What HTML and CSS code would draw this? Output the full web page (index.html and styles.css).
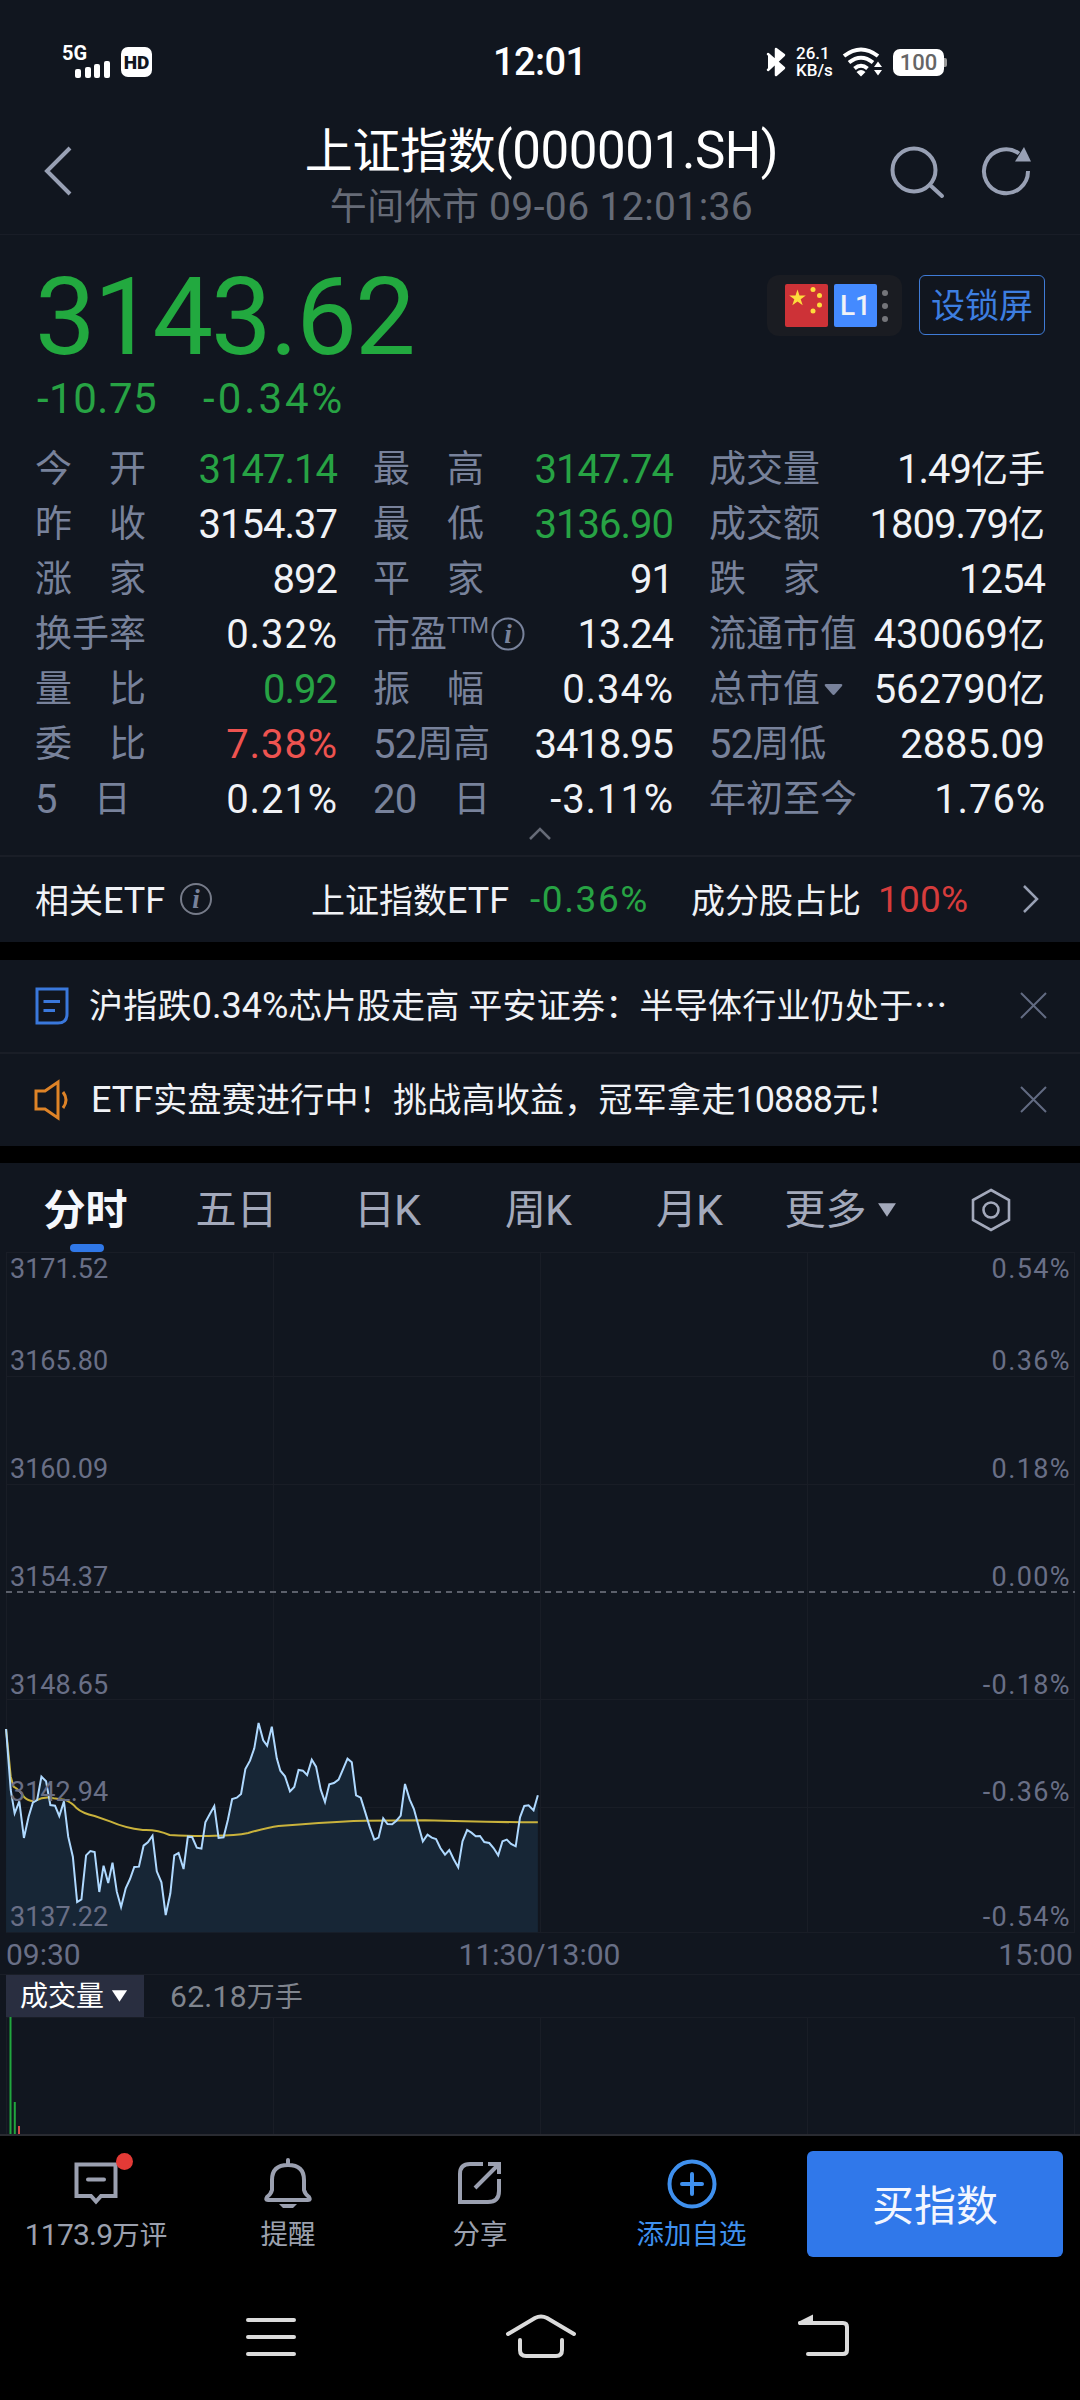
FILE: index.html
```
<!doctype html>
<html lang="zh-CN">
<head>
    <meta charset="UTF-8">
    <title>上证指数(000001.SH)</title>
    <link rel="stylesheet" href="styles.css">
</head>
<body>
<div class="phone">
    <!-- 状态栏 -->
    <div class="status">
        <div class="status-left">
            <svg width="50" height="34" viewBox="0 0 50 34">
                <text x="0" y="15" class="net">5G</text>
                <rect x="13" y="24" width="6" height="9" rx="2"/>
                <rect x="23" y="22" width="6" height="11" rx="2"/>
                <rect x="32" y="19" width="6" height="14" rx="2"/>
                <rect x="42" y="16" width="6" height="17" rx="2"/>
            </svg>
            <span class="hd">HD</span>
        </div>
        <div class="status-time">12:01</div>
        <div class="status-right">
            <svg width="20" height="30" viewBox="0 0 20 30" fill="none" stroke="#fff" stroke-width="2.5" stroke-linejoin="round" stroke-linecap="round">
                <path d="M2 7L18 21L10 28V2L18 8L2 23"/>
            </svg>
            <span class="speed">26.1<br>KB/s</span>
            <svg width="40" height="30" viewBox="0 0 40 30">
                <path d="M2 9Q19 -4 36 9M7 15.5Q19 6 31 15.5M12.5 21.5Q19 16 25.500 21.500" fill="none" stroke="#fff" stroke-width="4"/>
                <path d="M14.500 25Q19 21 23.500 25L19 29.500zM32 20L36 14.500L40 20zM32 23L36 28.500L40 23z"/>
            </svg>
            <span class="battery">100</span>
        </div>
    </div>
    <!-- 标题 -->
    <div class="header">
        <svg class="back" width="32" height="52" viewBox="0 0 32 52"><path d="M28 3L5 26L28 49"/></svg>
        <div class="header-text">
            <h1>上证指数<span>(000001.SH)</span></h1>
            <p>午间休市 <span>09-06 12:01:36</span></p>
        </div>
        <div class="header-icons">
            <svg width="56" height="52" viewBox="0 0 56 52"><circle cx="24" cy="24" r="21.500"/><path d="M40 39L52 50" stroke-linecap="round"/></svg>
            <svg width="50" height="52" viewBox="0 0 50 52"><path d="M37 7.500A22 22 0 1 0 46 25"/><path class="tip" d="M42 1L49 15.500H33z"/></svg>
        </div>
    </div>
    <!-- 最新价 -->
    <div class="quote">
        <div class="quote-left">
            <div class="price">3143.62</div>
            <div class="change"><span>-10.75</span><span class="rate">-0.34%</span></div>
        </div>
        <div class="quote-right">
            <div class="badges">
                <svg width="43" height="43" viewBox="0 0 43 43">
                    <rect width="43" height="43" rx="2" fill="#cd3237"/>
                    <g fill="#fddc3c">
                        <path d="M12.500 5.500L14.500 11.500H20.800L15.700 15.200L17.700 21.300L12.500 17.500L7.300 21.300L9.300 15.200L4.200 11.500H10.500z"/>
                        <circle cx="28" cy="5.500" r="2.500"/><circle cx="34.500" cy="11.500" r="2.500"/>
                        <circle cx="34.500" cy="21" r="2.500"/><circle cx="28" cy="27" r="2.500"/>
                    </g>
                </svg>
                <span class="level">L1</span>
                <span class="dots"><i></i><i></i><i></i></span>
            </div>
            <div class="lock">设锁屏</div>
        </div>
    </div>
    <!-- 指标 -->
    <div class="stats">
        <div><label>今　开</label><span class="down">3147.14</span></div>
        <div><label>最　高</label><span class="down">3147.74</span></div>
        <div><label>成交量</label><span>1.49<em>亿手</em></span></div>
        <div><label>昨　收</label><span>3154.37</span></div>
        <div><label>最　低</label><span class="down">3136.90</span></div>
        <div><label>成交额</label><span>1809.79<em>亿</em></span></div>
        <div><label>涨　家</label><span>892</span></div>
        <div><label>平　家</label><span>91</span></div>
        <div><label>跌　家</label><span>1254</span></div>
        <div><label>换手率</label><span class="pct">0.32%</span></div>
        <div><label>市盈<sup>TTM</sup><svg class="info" width="36" height="36" viewBox="0 0 36 36"><circle cx="18" cy="18" r="15.500"/><text x="18" y="27">i</text></svg></label><span>13.24</span></div>
        <div><label>流通市值</label><span class="wide">430069<em>亿</em></span></div>
        <div><label>量　比</label><span class="down">0.92</span></div>
        <div><label>振　幅</label><span class="pct">0.34%</span></div>
        <div><label>总市值<svg class="tri" width="19" height="13" viewBox="0 0 19 13"><path d="M2 1H17Q19 1 18 3L11 11Q9.500 13 8 11L1 3Q0 1 2 1"/></svg></label><span class="wide">562790<em>亿</em></span></div>
        <div><label>委　比</label><span class="pct up">7.38%</span></div>
        <div><label><b>52</b>周高</label><span>3418.95</span></div>
        <div><label><b>52</b>周低</label><span class="wide">2885.09</span></div>
        <div><label><b>5</b>　日</label><span class="pct">0.21%</span></div>
        <div><label><b>20</b>　日</label><span class="pct">-3.11%</span></div>
        <div><label>年初至今</label><span class="pct">1.76%</span></div>
    </div>
    <div class="fold"><svg width="24" height="16" viewBox="0 0 24 16"><path d="M2 12L12 2L22 12"/></svg></div>
    <!-- 相关ETF -->
    <div class="etf">
        <span class="etf-title">相关<b>ETF</b></span>
        <svg class="info" width="36" height="36" viewBox="0 0 36 36"><circle cx="18" cy="18" r="15"/><text x="18" y="27">i</text></svg>
        <span class="etf-name">上证指数<b>ETF</b></span>
        <span class="etf-num down">-0.36%</span>
        <span class="etf-part">成分股占比</span>
        <span class="etf-num red">100%</span>
        <svg class="arrow" width="20" height="32" viewBox="0 0 20 32"><path d="M3 3L16 16L3 29"/></svg>
    </div>
    <!-- 资讯 -->
    <div class="news">
        <div class="news-row">
            <svg width="36" height="40" viewBox="0 0 36 40" stroke="#3a78dc"><path d="M3 3H33V28Q33 37 24 37H3zM9.500 15.500H26M9.500 24.500H21"/></svg>
            <p>沪指跌<b>0.34%</b>芯片股走高 平安证券：半导体行业仍处于⋯</p>
            <svg class="close" width="27" height="27" viewBox="0 0 27 27"><path d="M1 1L26 26M26 1L1 26"/></svg>
        </div>
        <div class="news-row">
            <svg width="38" height="40" viewBox="0 0 38 40" stroke="#de8327"><path d="M2 11H11L24 2V38L11 29H2zM29 12Q35 20 29 28"/></svg>
            <p><b>ETF</b>实盘赛进行中！挑战高收益，冠军拿走<b class="tight">10888</b>元！</p>
            <svg class="close" width="27" height="27" viewBox="0 0 27 27"><path d="M1 1L26 26M26 1L1 26"/></svg>
        </div>
    </div>
    <!-- 周期切换 -->
    <div class="tabs">
        <div class="tab active">分时</div>
        <div class="tab">五日</div>
        <div class="tab">日<b>K</b></div>
        <div class="tab">周<b>K</b></div>
        <div class="tab">月<b>K</b></div>
        <div class="tab">更多<svg class="tri" width="20" height="14" viewBox="0 0 19 13"><path d="M1 0H18L9.500 13z"/></svg></div>
        <svg class="hex" width="42" height="44" viewBox="0 0 42 44"><path d="M21 2L39 12V32L21 42L3 32V12z"/><circle cx="21" cy="22" r="7.500"/></svg>
    </div>
    <!-- 分时图 -->
    <svg class="chart" width="1080" height="682" viewBox="0 1252 1080 682">
        <path class="grid" d="M6 1252.500H1075M6 1376.500H1075M6 1484.500H1075M6 1699.500H1075M6 1807.500H1075M6 1932.500H1075M6.500 1252V1932M273.500 1252V1932M540.500 1252V1932M807.500 1252V1932M1074.500 1252V1932"/>
        <path class="zero" d="M6 1592H1075"/>
        <g transform="translate(0 1700) scale(.35714 .33333)">
            <path class="area" d="M17 87L30 270L41 340L54 304L67 414L80 350L92 308L104 300L116 230L129 244L141 315L154 317L166 348L179 304L191 410L204 470L216 606L228 598L241 466L253 453L265 456L278 576L290 497L303 549L315 488L327 575L339 621L352 565L364 537L376 501L389 500L402 437L414 427L427 407L439 514L452 547L464 645L477 580L488 466L500 459L514 507L526 410L538 411L551 443L564 446L575 367L588 341L600 318L612 414L626 412L638 360L650 297L663 293L675 282L687 207L700 182L712 145L724 69L737 121L748 137L761 80L775 175L785 212L798 229L812 274L824 261L836 210L848 212L860 225L873 179L885 200L898 269L910 306L922 253L935 249L948 239L960 209L973 176L985 187L997 286L1010 293L1023 338L1035 380L1048 419L1060 413L1073 355L1085 372L1098 373L1110 362L1122 347L1134 252L1147 298L1159 327L1171 374L1184 424L1197 404L1209 413L1221 417L1233 444L1246 464L1258 450L1270 477L1283 502L1295 424L1308 390L1320 398L1332 409L1344 408L1356 426L1370 429L1382 444L1395 466L1407 424L1419 419L1431 432L1444 439L1456 352L1468 318L1480 316L1494 331L1506 286V697H17z"/>
            <path class="avg" d="M17 87L30 230L38 260Q55 270 68 292Q82 306 100 302Q125 287 150 295L180 299Q202 308 215 325Q230 340 265 348L310 365Q350 384 400 390Q440 388 475 405Q560 410 600 407Q660 407 695 399Q750 382 780 378Q900 368 990 363Q1120 361 1190 361Q1320 366 1506 367"/>
            <path class="line" d="M17 87L30 270L41 340L54 304L67 414L80 350L92 308L104 300L116 230L129 244L141 315L154 317L166 348L179 304L191 410L204 470L216 606L228 598L241 466L253 453L265 456L278 576L290 497L303 549L315 488L327 575L339 621L352 565L364 537L376 501L389 500L402 437L414 427L427 407L439 514L452 547L464 645L477 580L488 466L500 459L514 507L526 410L538 411L551 443L564 446L575 367L588 341L600 318L612 414L626 412L638 360L650 297L663 293L675 282L687 207L700 182L712 145L724 69L737 121L748 137L761 80L775 175L785 212L798 229L812 274L824 261L836 210L848 212L860 225L873 179L885 200L898 269L910 306L922 253L935 249L948 239L960 209L973 176L985 187L997 286L1010 293L1023 338L1035 380L1048 419L1060 413L1073 355L1085 372L1098 373L1110 362L1122 347L1134 252L1147 298L1159 327L1171 374L1184 424L1197 404L1209 413L1221 417L1233 444L1246 464L1258 450L1270 477L1283 502L1295 424L1308 390L1320 398L1332 409L1344 408L1356 426L1370 429L1382 444L1395 466L1407 424L1419 419L1431 432L1444 439L1456 352L1468 318L1480 316L1494 331L1506 286"/>
        </g>
        <g class="axis">
            <text x="10" y="1278">3171.52</text><text x="10" y="1370">3165.80</text>
            <text x="10" y="1478">3160.09</text><text x="10" y="1586">3154.37</text>
            <text x="10" y="1694">3148.65</text><text x="10" y="1801">3142.94</text>
            <text x="10" y="1926">3137.22</text>
        </g>
        <g class="axis right">
            <text x="1071" y="1278">0.54%</text><text x="1071" y="1370">0.36%</text>
            <text x="1071" y="1478">0.18%</text><text x="1071" y="1586">0.00%</text>
            <text x="1071" y="1694">-0.18%</text><text x="1071" y="1801">-0.36%</text>
            <text x="1071" y="1926">-0.54%</text>
        </g>
    </svg>
    <div class="times"><span>09:30</span><span>11:30/13:00</span><span>15:00</span></div>
    <!-- 成交量 -->
    <div class="vol-head">
        <div class="vol-type">成交量<svg class="tri" width="17" height="12" viewBox="0 0 19 13"><path d="M1 0H18L9.500 13z"/></svg></div>
        <span><b>62.18</b>万手</span>
    </div>
    <svg class="vol" width="1080" height="117" viewBox="0 0 1080 117">
        <path class="grid" d="M6 .5H1075M6.500 0V117M273.500 0V117M540.500 0V117M807.500 0V117M1074.500 0V117"/>
        <path d="M10.500 0V117M14.800 85V117" stroke="#21a63e" stroke-width="2"/>
        <path d="M19 109V117" stroke="#d64a48" stroke-width="2"/>
    </svg>
    <!-- 底部操作 -->
    <div class="bottom">
        <div class="act">
            <svg width="64" height="64" viewBox="0 0 64 64"><path d="M12.500 16.500H51.500V48H37L32 53.500L27 48H12.500zM24 31.500H40" stroke-linecap="round"/><circle class="dot" cx="60.500" cy="13.500" r="8.500"/></svg>
            <span><b>1173.9</b>万评</span>
        </div>
        <div class="act">
            <svg width="64" height="64" viewBox="0 0 64 64"><path d="M32 12V15M16 32Q16 17 32 17Q48 17 48 32V42Q49 46 53 49Q55 52 52 52H12Q9 52 11 49Q15 46 16 42z" stroke-linecap="round"/><path class="fill" d="M23 56H41L37 60H27z"/></svg>
            <span>提醒</span>
        </div>
        <div class="act">
            <svg width="64" height="64" viewBox="0 0 64 64"><path d="M35 16H22Q12 16 12 26V54H40Q51 54 51 43V31M40 16H51V26M51 16L27 40" stroke-linecap="butt"/></svg>
            <span>分享</span>
        </div>
        <div class="act add">
            <svg width="64" height="64" viewBox="0 0 64 64"><circle cx="32" cy="36" r="22.500"/><path d="M32 26V46M22 36H42" stroke-linecap="round"/></svg>
            <span>添加自选</span>
        </div>
        <div class="buy">买指数</div>
    </div>
    <!-- 系统导航 -->
    <div class="nav">
        <svg width="1080" height="60" viewBox="0 2307 1080 60">
            <path d="M248 2320H294M248 2337H294M248 2354H294"/>
            <path d="M508 2334L535 2318Q541 2315 547 2318L574 2334M520 2340V2350Q520 2356 526 2356H556Q562 2356 562 2350V2340"/>
            <path d="M808 2354H843Q847 2354 847 2350V2327Q847 2323 843 2323H800"/>
            <path class="fill" d="M798 2322L813 2314.500V2325H799z"/>
        </svg>
    </div>
</div>
</body>
</html>
```
FILE: styles.css
```
*{margin:0;padding:0;box-sizing:border-box;}
body{
    background:#000;
    font-family:Roboto,"Noto Sans CJK SC",sans-serif;
    color:#f0f2f6;
}
svg{display:block;flex:none;overflow:visible;}
b,em,i{font-weight:400;font-style:normal;}
.phone{
    width:1080px;
    height:2400px;
    overflow:hidden;
    white-space:nowrap;
}
.down{color:#27a344;}
.up{color:#ee5350;}
.red{color:#d63c3c;}

/* 状态栏 */
.status{
    height:120px;
    padding:4px 136px 0 62px;
    background:#11161f;
    display:grid;
    grid-template-columns:1fr auto 1fr;
    align-items:center;
    color:#fff;
}
.status svg{fill:#fff;}
.status-left{display:flex;align-items:center;gap:9px;}
.net{font-size:20px;font-weight:700;}
.hd{
    width:31px;
    height:30px;
    border-radius:7px;
    background:#fff;
    color:#11161f;
    font-size:19px;
    font-weight:900;
    line-height:31px;
    text-align:center;
}
.status-time{
    width:90px;
    margin-right:-70px;
    font-size:38px;
    font-weight:500;
    letter-spacing:-.6px;
    line-height:50px;
}
.status-right{display:flex;align-items:center;justify-content:flex-end;}
.speed{width:36px;margin:0 10px 0 10px;font-size:17px;font-weight:500;line-height:17px;}
.battery{
    position:relative;
    width:51px;
    height:27px;
    margin-left:11px;
    border-radius:7px;
    background:#fff;
    color:#666;
    font-size:22px;
    font-weight:500;
    line-height:28px;
    text-align:center;
}
.battery:after{
    content:"";
    position:absolute;
    right:-3px;
    top:9px;
    width:3px;
    height:9px;
    background:#999;
    border-radius:0 2px 2px 0;
}

/* 标题 */
.header{
    height:115px;
    padding:0 48px 0 42px;
    background:#11161f;
    border-bottom:1px solid #191d27;
    display:flex;
    align-items:flex-start;
}
.header svg{fill:none;stroke:#98a0b4;stroke-width:4;}
.header .tip{fill:#98a0b4;stroke:none;}
.back{margin-top:25px;}
.header-text{width:560px;margin-left:188px;text-align:center;}
.header h1{
    margin-top:-2px;
    font-size:48px;
    font-weight:400;
    line-height:66px;
    letter-spacing:-.4px;
    color:#fff;
}
.header h1 span{font-size:51px;}
.header p{font-size:37px;line-height:48px;color:#666b77;margin-top:-2px;letter-spacing:.4px;}
.header p span{font-size:39px;}
.header-icons{display:flex;gap:36px;margin:26px 0 0 69px;}

/* 最新价 */
.quote{
    height:206px;
    padding:0 35px 0 36px;
    background:#11161f;
    display:flex;
    justify-content:space-between;
}
.price{
    font-size:108px;
    line-height:108px;
    letter-spacing:-2px;
    color:#22a93f;
    padding-top:28px;
    margin-left:-1px;
}
.change{
    display:flex;
    gap:46px;
    font-size:42px;
    line-height:46px;
    color:#27a344;
    padding:5px 0 0 1px;
    letter-spacing:.5px;
}
.change .rate{letter-spacing:3px;}
.quote-right{display:flex;gap:17px;padding-top:40px;}
.badges{
    width:135px;
    height:61px;
    padding-left:18px;
    background:#1a1c22;
    border-radius:12px;
    display:flex;
    align-items:center;
}
.level{
    width:43px;
    height:43px;
    margin:0 5px 0 6px;
    border-radius:2px;
    background:#448aff;
    font-size:28px;
    font-weight:500;
    line-height:43px;
    text-align:center;
}
.dots{display:flex;flex-direction:column;gap:7px;}
.dots i{width:6px;height:6px;border-radius:3px;background:#74757a;}
.lock{
    width:126px;
    height:60px;
    border:1px solid #3f7bd6;
    border-radius:6px;
    font-size:34px;
    line-height:60px;
    text-align:center;
    color:#3d7ee0;
}

/* 指标 */
.stats{
    height:386px;
    padding:1px 35px 0 35px;
    background:#11161f;
    display:grid;
    grid-template-columns:302px 300px 336px;
    column-gap:36px;
    grid-auto-rows:55px;
}
.stats div{display:flex;justify-content:space-between;line-height:56px;}
.stats label{display:flex;font-size:37px;color:#78829b;}
.stats label b{font-size:40px;letter-spacing:-.8px;}
.stats label sup{font-size:22px;line-height:38px;letter-spacing:-1.8px;}
.stats div > span{font-size:40px;letter-spacing:-1px;}
.stats div .wide{letter-spacing:-.1px;}
.stats div .pct{letter-spacing:.9px;margin-right:-1px;}
.stats div em{font-size:37px;letter-spacing:0;}
.info{fill:none;stroke:#78829b;stroke-width:2;}
.info text{
    font:italic 700 27px "Liberation Serif",serif;
    fill:#78829b;
    stroke:none;
    text-anchor:middle;
}
.stats .info{margin:9px 0 0 3px;}
.stats .tri{margin:21px 0 0 4px;fill:#78829b;}
.fold{height:28px;background:#11161f;}
.fold svg{margin:0 auto;fill:none;stroke:#666b77;stroke-width:2.500;}

/* 相关ETF */
.etf{
    height:87px;
    padding:0 39px 2px 35px;
    background:#11161f;
    border-top:2px solid #1a1e27;
    display:flex;
    align-items:center;
    font-size:34px;
}
.etf b{font-size:36px;}
.etf-title{width:143px;}
.etf-name{width:219px;margin-left:97px;}
.etf-num{width:161px;font-size:37px;letter-spacing:1.6px;padding-top:1px;}
.etf-part{width:187px;}
.etf .red{width:143px;letter-spacing:.2px;}
.etf .info{stroke:#767b89;}
.arrow{fill:none;stroke:#98a0b4;stroke-width:2.500;}

/* 资讯 */
.news{
    border-top:18px solid #000;
    border-bottom:17px solid #000;
}
.news-row{
    height:92px;
    padding:0 33px 1px 34px;
    background:#11161f;
    display:flex;
    align-items:center;
    font-size:34px;
}
.news-row + .news-row{height:94px;border-top:2px solid #1a1e27;}
.news-row svg{fill:none;stroke-width:3;}
.news-row p{flex:1;margin-left:19px;letter-spacing:.25px;line-height:48px;}
.news-row b{font-size:36px;letter-spacing:0;}
.news-row .tight{letter-spacing:-.9px;}
.news-row .close{stroke:#626b82;stroke-width:2;}

/* 周期切换 */
.tabs{
    height:89px;
    background:#11161f;
    display:flex;
    align-items:center;
    padding-left:10px;
    font-size:41px;
    color:#a3a9bb;
}
.tab{width:151px;display:flex;justify-content:center;align-items:center;line-height:89px;padding-top:5px;height:89px;}
.tab b{font-size:43px;margin-left:-1px;}
.tab.active{
    position:relative;
    font-weight:700;
    font-size:42px;
    color:#f5f7fb;
}
.tab.active:after{
    content:"";
    position:absolute;
    left:60px;
    bottom:0;
    width:34px;
    height:8px;
    border-radius:4px;
    background:#3078e8;
}
.tabs .tri{fill:#a3a9bb;margin-left:10px;}
.hex{margin:4px 0 0 54px;fill:none;stroke:#a3a9bb;stroke-width:2.600;}

/* 分时图 */
.chart,.vol{background:#11161f;}
.grid{stroke:#191d26;fill:none;}
.zero{stroke:#5c606b;stroke-width:2;stroke-dasharray:6 5;}
.area{fill:#172636;}
.line,.avg{fill:none;stroke:#afd9ff;stroke-width:2;vector-effect:non-scaling-stroke;}
.avg{stroke:#c9b23c;}
.axis text{font-size:27px;fill:#696f86;}
.right text{text-anchor:end;letter-spacing:1.4px;}
.times{
    height:40px;
    padding:0 7px 0 6px;
    background:#11161f;
    display:flex;
    justify-content:space-between;
    font-size:30px;
    line-height:41px;
    color:#696f86;
}
.vol-head{
    height:43px;
    padding-left:6px;
    background:#11161f;
    border-top:1px solid #1a1e27;
    display:flex;
    font-size:28px;
    line-height:43px;
    color:#80858e;
}
.vol-head b{font-size:30px;letter-spacing:.3px;}
.vol-type{
    width:138px;
    margin-right:26px;
    padding-left:14px;
    background:#292e40;
    color:#fff;
    display:flex;
    align-items:center;
}
.vol-type .tri{fill:#fff;margin-left:7px;}

/* 底部操作 */
.bottom{
    height:146px;
    border-top:2px solid #292b31;
    padding-right:17px;
    display:flex;
    font-size:27.500px;
    color:#9ba0ae;
}
.act{width:192px;padding-top:12px;display:flex;flex-direction:column;align-items:center;line-height:45px;}
.act svg{fill:none;stroke:#9ba0b0;stroke-width:4;}
.act .dot{fill:#e33a36;stroke:none;}
.act .fill{fill:#9ba0b0;stroke:none;}
.act b{font-size:30px;letter-spacing:-.8px;}
.add{width:231px;color:#3f90ee;}
.add svg{stroke:#3f90ee;}
.buy{
    width:256px;
    height:106px;
    margin-top:15px;
    border-radius:6px;
    background:#3078ea;
    color:#f2f6ff;
    font-size:42px;
    line-height:111px;
    text-align:center;
}

/* 系统导航 */
.nav{padding-top:27px;}
.nav svg{fill:none;stroke:#dbdbdb;stroke-width:4;stroke-linecap:round;}
.nav .fill{fill:#dbdbdb;stroke:none;}
```
